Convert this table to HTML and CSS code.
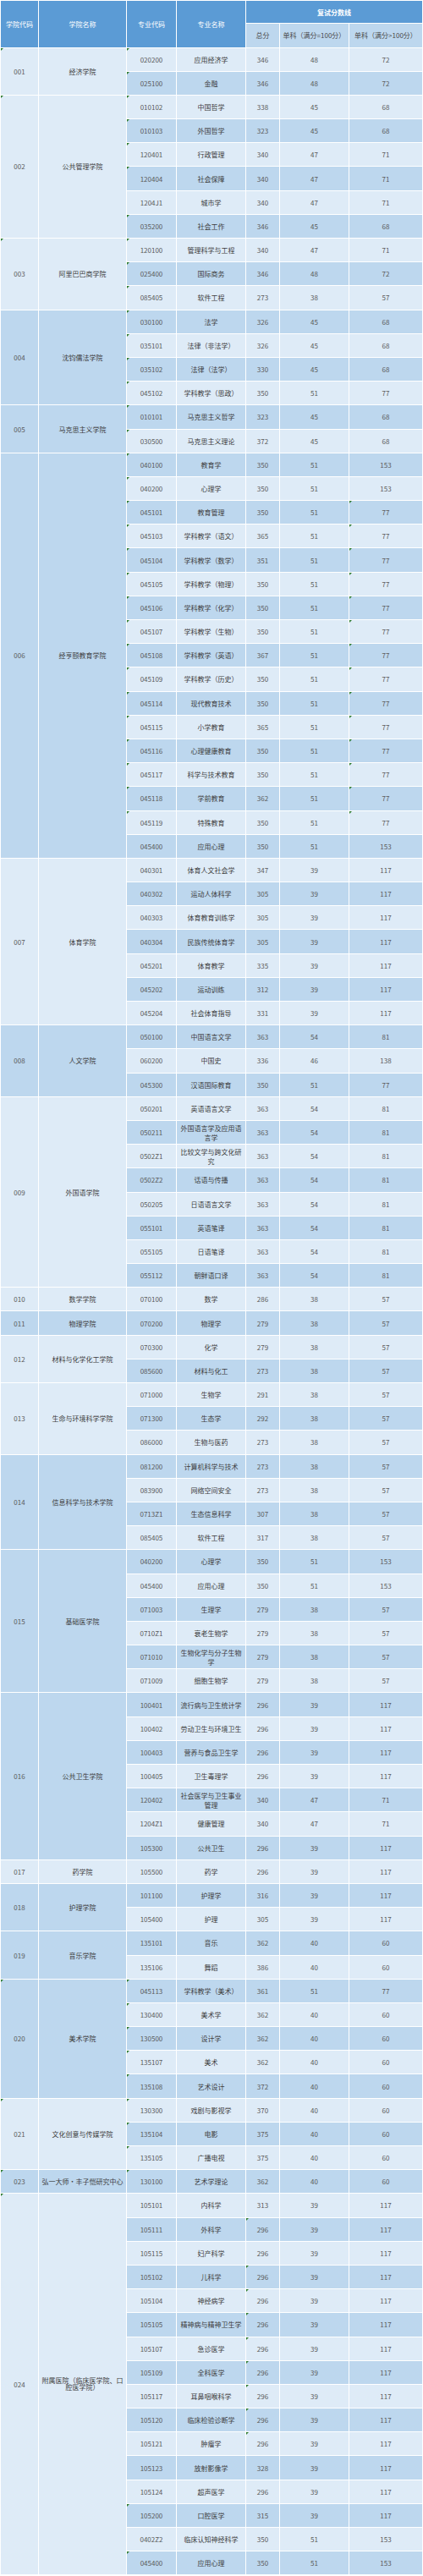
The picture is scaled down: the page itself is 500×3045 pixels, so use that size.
FILE: index.html
```html
<!DOCTYPE html>
<html lang="zh-CN">
<head>
<meta charset="utf-8">
<title>复试分数线</title>
<link rel="stylesheet" href="styles.css">
</head>
<body>
<table class="score">
<colgroup>
<col class="c1"><col class="c2"><col class="c3"><col class="c4"><col class="c5"><col class="c6"><col class="c7">
</colgroup>
<thead>
<tr class="h1">
<th rowspan="2">学院代码</th><th rowspan="2">学院名称</th><th rowspan="2">专业代码</th><th rowspan="2">专业名称</th><th colspan="3" class="grp">复试分数线</th>
</tr>
<tr class="h2">
<th>总分</th><th>单科（满分=100分）</th><th>单科（满分&gt;100分）</th>
</tr>
</thead>
<tbody>
<tr class="a"><td rowspan="2" class="g">001</td><td rowspan="2" class="nm">经济学院</td><td class="g">020200</td><td class="nm">应用经济学</td><td>346</td><td>48</td><td>72</td></tr>
<tr class="b"><td class="g">025100</td><td class="nm">金融</td><td>346</td><td>48</td><td>72</td></tr>
<tr class="a"><td rowspan="6" class="g">002</td><td rowspan="6" class="nm">公共管理学院</td><td class="g">010102</td><td class="nm">中国哲学</td><td>338</td><td>45</td><td>68</td></tr>
<tr class="b"><td class="g">010103</td><td class="nm">外国哲学</td><td>323</td><td>45</td><td>68</td></tr>
<tr class="a"><td class="g">120401</td><td class="nm">行政管理</td><td>340</td><td>47</td><td>71</td></tr>
<tr class="b"><td class="g">120404</td><td class="nm">社会保障</td><td>340</td><td>47</td><td>71</td></tr>
<tr class="a"><td>1204J1</td><td class="nm">城市学</td><td>340</td><td>47</td><td>71</td></tr>
<tr class="b"><td class="g">035200</td><td class="nm">社会工作</td><td>346</td><td>45</td><td>68</td></tr>
<tr class="a"><td rowspan="3" class="g">003</td><td rowspan="3" class="nm">阿里巴巴商学院</td><td class="g">120100</td><td class="nm">管理科学与工程</td><td>340</td><td>47</td><td>71</td></tr>
<tr class="b"><td class="g">025400</td><td class="nm">国际商务</td><td>346</td><td>48</td><td>72</td></tr>
<tr class="a"><td class="g">085405</td><td class="nm">软件工程</td><td>273</td><td>38</td><td>57</td></tr>
<tr class="b"><td rowspan="4">004</td><td rowspan="4" class="nm">沈钧儒法学院</td><td class="g">030100</td><td class="nm">法学</td><td>326</td><td>45</td><td>68</td></tr>
<tr class="a"><td class="g">035101</td><td class="nm">法律（非法学）</td><td>326</td><td>45</td><td>68</td></tr>
<tr class="b"><td class="g">035102</td><td class="nm">法律（法学）</td><td>330</td><td>45</td><td>68</td></tr>
<tr class="a"><td class="g">045102</td><td class="nm">学科教学（思政）</td><td>350</td><td>51</td><td>77</td></tr>
<tr class="b"><td rowspan="2">005</td><td rowspan="2" class="nm">马克思主义学院</td><td class="g">010101</td><td class="nm">马克思主义哲学</td><td>323</td><td>45</td><td>68</td></tr>
<tr class="a"><td class="g">030500</td><td class="nm">马克思主义理论</td><td>372</td><td>45</td><td>68</td></tr>
<tr class="b"><td rowspan="17">006</td><td rowspan="17" class="nm">经亨颐教育学院</td><td class="g">040100</td><td class="nm">教育学</td><td>350</td><td>51</td><td>153</td></tr>
<tr class="a"><td class="g">040200</td><td class="nm">心理学</td><td>350</td><td>51</td><td>153</td></tr>
<tr class="b"><td class="g">045101</td><td class="nm">教育管理</td><td>350</td><td>51</td><td class="g">77</td></tr>
<tr class="a"><td class="g">045103</td><td class="nm">学科教学（语文）</td><td>365</td><td>51</td><td class="g">77</td></tr>
<tr class="b"><td class="g">045104</td><td class="nm">学科教学（数学）</td><td>351</td><td>51</td><td class="g">77</td></tr>
<tr class="a"><td class="g">045105</td><td class="nm">学科教学（物理）</td><td>350</td><td>51</td><td class="g">77</td></tr>
<tr class="b"><td class="g">045106</td><td class="nm">学科教学（化学）</td><td>350</td><td>51</td><td class="g">77</td></tr>
<tr class="a"><td class="g">045107</td><td class="nm">学科教学（生物）</td><td>350</td><td>51</td><td class="g">77</td></tr>
<tr class="b"><td class="g">045108</td><td class="nm">学科教学（英语）</td><td>367</td><td>51</td><td class="g">77</td></tr>
<tr class="a"><td class="g">045109</td><td class="nm">学科教学（历史）</td><td>350</td><td>51</td><td class="g">77</td></tr>
<tr class="b"><td class="g">045114</td><td class="nm">现代教育技术</td><td>350</td><td>51</td><td class="g">77</td></tr>
<tr class="a"><td class="g">045115</td><td class="nm">小学教育</td><td>365</td><td>51</td><td class="g">77</td></tr>
<tr class="b"><td class="g">045116</td><td class="nm">心理健康教育</td><td>350</td><td>51</td><td class="g">77</td></tr>
<tr class="a"><td class="g">045117</td><td class="nm">科学与技术教育</td><td>350</td><td>51</td><td class="g">77</td></tr>
<tr class="b"><td class="g">045118</td><td class="nm">学前教育</td><td>362</td><td>51</td><td class="g">77</td></tr>
<tr class="a"><td class="g">045119</td><td class="nm">特殊教育</td><td>350</td><td>51</td><td class="g">77</td></tr>
<tr class="b"><td>045400</td><td class="nm">应用心理</td><td>350</td><td>51</td><td>153</td></tr>
<tr class="a"><td rowspan="7">007</td><td rowspan="7" class="nm">体育学院</td><td>040301</td><td class="nm">体育人文社会学</td><td>347</td><td>39</td><td>117</td></tr>
<tr class="b"><td>040302</td><td class="nm">运动人体科学</td><td>305</td><td>39</td><td>117</td></tr>
<tr class="a"><td>040303</td><td class="nm">体育教育训练学</td><td>305</td><td>39</td><td>117</td></tr>
<tr class="b"><td>040304</td><td class="nm">民族传统体育学</td><td>305</td><td>39</td><td>117</td></tr>
<tr class="a"><td>045201</td><td class="nm">体育教学</td><td>335</td><td>39</td><td>117</td></tr>
<tr class="b"><td>045202</td><td class="nm">运动训练</td><td>312</td><td>39</td><td>117</td></tr>
<tr class="a"><td>045204</td><td class="nm">社会体育指导</td><td>331</td><td>39</td><td>117</td></tr>
<tr class="b"><td rowspan="3">008</td><td rowspan="3" class="nm">人文学院</td><td>050100</td><td class="nm">中国语言文学</td><td>363</td><td>54</td><td>81</td></tr>
<tr class="a"><td>060200</td><td class="nm">中国史</td><td>336</td><td>46</td><td>138</td></tr>
<tr class="b"><td>045300</td><td class="nm">汉语国际教育</td><td>350</td><td>51</td><td>77</td></tr>
<tr class="a"><td rowspan="8">009</td><td rowspan="8" class="nm">外国语学院</td><td>050201</td><td class="nm">英语语言文学</td><td>363</td><td>54</td><td>81</td></tr>
<tr class="b"><td>050211</td><td class="nm">外国语言学及应用语言学</td><td>363</td><td>54</td><td>81</td></tr>
<tr class="a"><td>0502Z1</td><td class="nm">比较文学与跨文化研究</td><td>363</td><td>54</td><td>81</td></tr>
<tr class="b"><td>0502Z2</td><td class="nm">话语与传播</td><td>363</td><td>54</td><td>81</td></tr>
<tr class="a"><td>050205</td><td class="nm">日语语言文学</td><td>363</td><td>54</td><td>81</td></tr>
<tr class="b"><td>055101</td><td class="nm">英语笔译</td><td>363</td><td>54</td><td>81</td></tr>
<tr class="a"><td>055105</td><td class="nm">日语笔译</td><td>363</td><td>54</td><td>81</td></tr>
<tr class="b"><td>055112</td><td class="nm">朝鲜语口译</td><td>363</td><td>54</td><td>81</td></tr>
<tr class="a"><td>010</td><td class="nm">数学学院</td><td>070100</td><td class="nm">数学</td><td>286</td><td>38</td><td>57</td></tr>
<tr class="b"><td>011</td><td class="nm">物理学院</td><td>070200</td><td class="nm">物理学</td><td>279</td><td>38</td><td>57</td></tr>
<tr class="a"><td rowspan="2">012</td><td rowspan="2" class="nm">材料与化学化工学院</td><td>070300</td><td class="nm">化学</td><td>279</td><td>38</td><td>57</td></tr>
<tr class="b"><td>085600</td><td class="nm">材料与化工</td><td>273</td><td>38</td><td>57</td></tr>
<tr class="a"><td rowspan="3">013</td><td rowspan="3" class="nm">生命与环境科学学院</td><td>071000</td><td class="nm">生物学</td><td>291</td><td>38</td><td>57</td></tr>
<tr class="b"><td>071300</td><td class="nm">生态学</td><td>292</td><td>38</td><td>57</td></tr>
<tr class="a"><td>086000</td><td class="nm">生物与医药</td><td>273</td><td>38</td><td>57</td></tr>
<tr class="b"><td rowspan="4">014</td><td rowspan="4" class="nm">信息科学与技术学院</td><td>081200</td><td class="nm">计算机科学与技术</td><td>273</td><td>38</td><td>57</td></tr>
<tr class="a"><td>083900</td><td class="nm">网络空间安全</td><td>273</td><td>38</td><td>57</td></tr>
<tr class="b"><td>0713Z1</td><td class="nm">生态信息科学</td><td>307</td><td>38</td><td>57</td></tr>
<tr class="a"><td>085405</td><td class="nm">软件工程</td><td>317</td><td>38</td><td>57</td></tr>
<tr class="b"><td rowspan="6">015</td><td rowspan="6" class="nm">基础医学院</td><td>040200</td><td class="nm">心理学</td><td>350</td><td>51</td><td>153</td></tr>
<tr class="a"><td>045400</td><td class="nm">应用心理</td><td>350</td><td>51</td><td>153</td></tr>
<tr class="b"><td>071003</td><td class="nm">生理学</td><td>279</td><td>38</td><td>57</td></tr>
<tr class="a"><td>0710Z1</td><td class="nm">衰老生物学</td><td>279</td><td>38</td><td>57</td></tr>
<tr class="b"><td>071010</td><td class="nm">生物化学与分子生物学</td><td>279</td><td>38</td><td>57</td></tr>
<tr class="a"><td>071009</td><td class="nm">细胞生物学</td><td>279</td><td>38</td><td>57</td></tr>
<tr class="b"><td rowspan="7">016</td><td rowspan="7" class="nm">公共卫生学院</td><td>100401</td><td class="nm">流行病与卫生统计学</td><td>296</td><td>39</td><td>117</td></tr>
<tr class="a"><td>100402</td><td class="nm">劳动卫生与环境卫生</td><td>296</td><td>39</td><td>117</td></tr>
<tr class="b"><td>100403</td><td class="nm">营养与食品卫生学</td><td>296</td><td>39</td><td>117</td></tr>
<tr class="a"><td>100405</td><td class="nm">卫生毒理学</td><td>296</td><td>39</td><td>117</td></tr>
<tr class="b"><td>120402</td><td class="nm">社会医学与卫生事业管理</td><td>340</td><td>47</td><td>71</td></tr>
<tr class="a"><td>1204Z1</td><td class="nm">健康管理</td><td>340</td><td>47</td><td>71</td></tr>
<tr class="b"><td>105300</td><td class="nm">公共卫生</td><td>296</td><td>39</td><td>117</td></tr>
<tr class="a"><td>017</td><td class="nm">药学院</td><td>105500</td><td class="nm">药学</td><td>296</td><td>39</td><td>117</td></tr>
<tr class="b"><td rowspan="2">018</td><td rowspan="2" class="nm">护理学院</td><td>101100</td><td class="nm">护理学</td><td>316</td><td>39</td><td>117</td></tr>
<tr class="a"><td>105400</td><td class="nm">护理</td><td>305</td><td>39</td><td>117</td></tr>
<tr class="b"><td rowspan="2">019</td><td rowspan="2" class="nm">音乐学院</td><td>135101</td><td class="nm">音乐</td><td>362</td><td>40</td><td>60</td></tr>
<tr class="a"><td>135106</td><td class="nm">舞蹈</td><td>386</td><td>40</td><td>60</td></tr>
<tr class="b"><td rowspan="5" class="g">020</td><td rowspan="5" class="nm">美术学院</td><td class="g">045113</td><td class="nm">学科教学（美术）</td><td>361</td><td>51</td><td>77</td></tr>
<tr class="a"><td class="g">130400</td><td class="nm">美术学</td><td>362</td><td>40</td><td>60</td></tr>
<tr class="b"><td class="g">130500</td><td class="nm">设计学</td><td>362</td><td>40</td><td>60</td></tr>
<tr class="a"><td class="g">135107</td><td class="nm">美术</td><td>362</td><td>40</td><td>60</td></tr>
<tr class="b"><td class="g">135108</td><td class="nm">艺术设计</td><td>372</td><td>40</td><td>60</td></tr>
<tr class="a"><td rowspan="3" class="g">021</td><td rowspan="3" class="nm">文化创意与传媒学院</td><td class="g">130300</td><td class="nm">戏剧与影视学</td><td>370</td><td>40</td><td>60</td></tr>
<tr class="b"><td class="g">135104</td><td class="nm">电影</td><td>375</td><td>40</td><td>60</td></tr>
<tr class="a"><td class="g">135105</td><td class="nm">广播电视</td><td>375</td><td>40</td><td>60</td></tr>
<tr class="b"><td class="g">023</td><td class="nm">弘一大师•丰子恺研究中心</td><td class="g">130100</td><td class="nm">艺术学理论</td><td>362</td><td>40</td><td>60</td></tr>
<tr class="a"><td rowspan="16" class="g">024</td><td rowspan="16" class="nm tight">附属医院（临床医学院、口腔医学院）</td><td>105101</td><td class="nm">内科学</td><td>313</td><td>39</td><td>117</td></tr>
<tr class="b"><td>105111</td><td class="nm">外科学</td><td class="g">296</td><td>39</td><td>117</td></tr>
<tr class="a"><td>105115</td><td class="nm">妇产科学</td><td>296</td><td>39</td><td>117</td></tr>
<tr class="b"><td>105102</td><td class="nm">儿科学</td><td class="g">296</td><td>39</td><td>117</td></tr>
<tr class="a"><td>105104</td><td class="nm">神经病学</td><td class="g">296</td><td>39</td><td>117</td></tr>
<tr class="b"><td>105105</td><td class="nm">精神病与精神卫生学</td><td class="g">296</td><td>39</td><td>117</td></tr>
<tr class="a"><td>105107</td><td class="nm">急诊医学</td><td class="g">296</td><td>39</td><td>117</td></tr>
<tr class="b"><td>105109</td><td class="nm">全科医学</td><td class="g">296</td><td>39</td><td>117</td></tr>
<tr class="a"><td>105117</td><td class="nm">耳鼻咽喉科学</td><td class="g">296</td><td>39</td><td>117</td></tr>
<tr class="b"><td>105120</td><td class="nm">临床检验诊断学</td><td class="g">296</td><td>39</td><td>117</td></tr>
<tr class="a"><td>105121</td><td class="nm">肿瘤学</td><td class="g">296</td><td>39</td><td>117</td></tr>
<tr class="b"><td>105123</td><td class="nm">放射影像学</td><td>328</td><td>39</td><td>117</td></tr>
<tr class="a"><td>105124</td><td class="nm">超声医学</td><td>296</td><td>39</td><td>117</td></tr>
<tr class="b"><td class="g">105200</td><td class="nm">口腔医学</td><td>315</td><td>39</td><td>117</td></tr>
<tr class="a"><td>0402Z2</td><td class="nm">临床认知神经科学</td><td>350</td><td>51</td><td>153</td></tr>
<tr class="b"><td class="g">045400</td><td class="nm">应用心理</td><td>350</td><td>51</td><td>153</td></tr>
</tbody>
</table>
</body>
</html>
```

FILE: styles.css
```css
html, body {
  margin: 0;
  padding: 0;
  background: #ffffff;
}

.score {
  width: 500px;
  table-layout: fixed;
  border-collapse: separate;
  border-spacing: 1px;
  background: #ffffff;
  font-family: "Noto Sans CJK SC", "Noto Sans", sans-serif;
  font-size: 8px;
  color: #5a5a5a;
}

.c1 { width: 44px; }
.c2 { width: 103px; }
.c3 { width: 58px; }
.c4 { width: 81px; }
.c5 { width: 39px; }
.c6 { width: 81px; }
.c7 { width: 86px; }

.score th,
.score td {
  padding: 0 2px;
  text-align: center;
  vertical-align: middle;
  line-height: 11px;
  font-weight: normal;
  overflow: hidden;
}

.h1 th {
  height: 26px;
  background: #5b9bd5;
  color: #ffffff;
}

.h1 .grp {
  font-weight: bold;
}

.h2 th {
  height: 27.5px;
  background: #bdd7ee;
  color: #4a4a4a;
}

.score tbody td {
  height: 27.2px;
  position: relative;
}

.score tr.a > td { background: #deebf7; }
.score tr.b > td { background: #bdd7ee; }

.score td.nm { color: #3c3c3c; }

.score td.tight {
  line-height: 8px;
}

.score td.g::before {
  content: "";
  position: absolute;
  left: 0;
  top: 0;
  border-top: 3px solid #2f7d32;
  border-right: 3px solid transparent;
}
```
